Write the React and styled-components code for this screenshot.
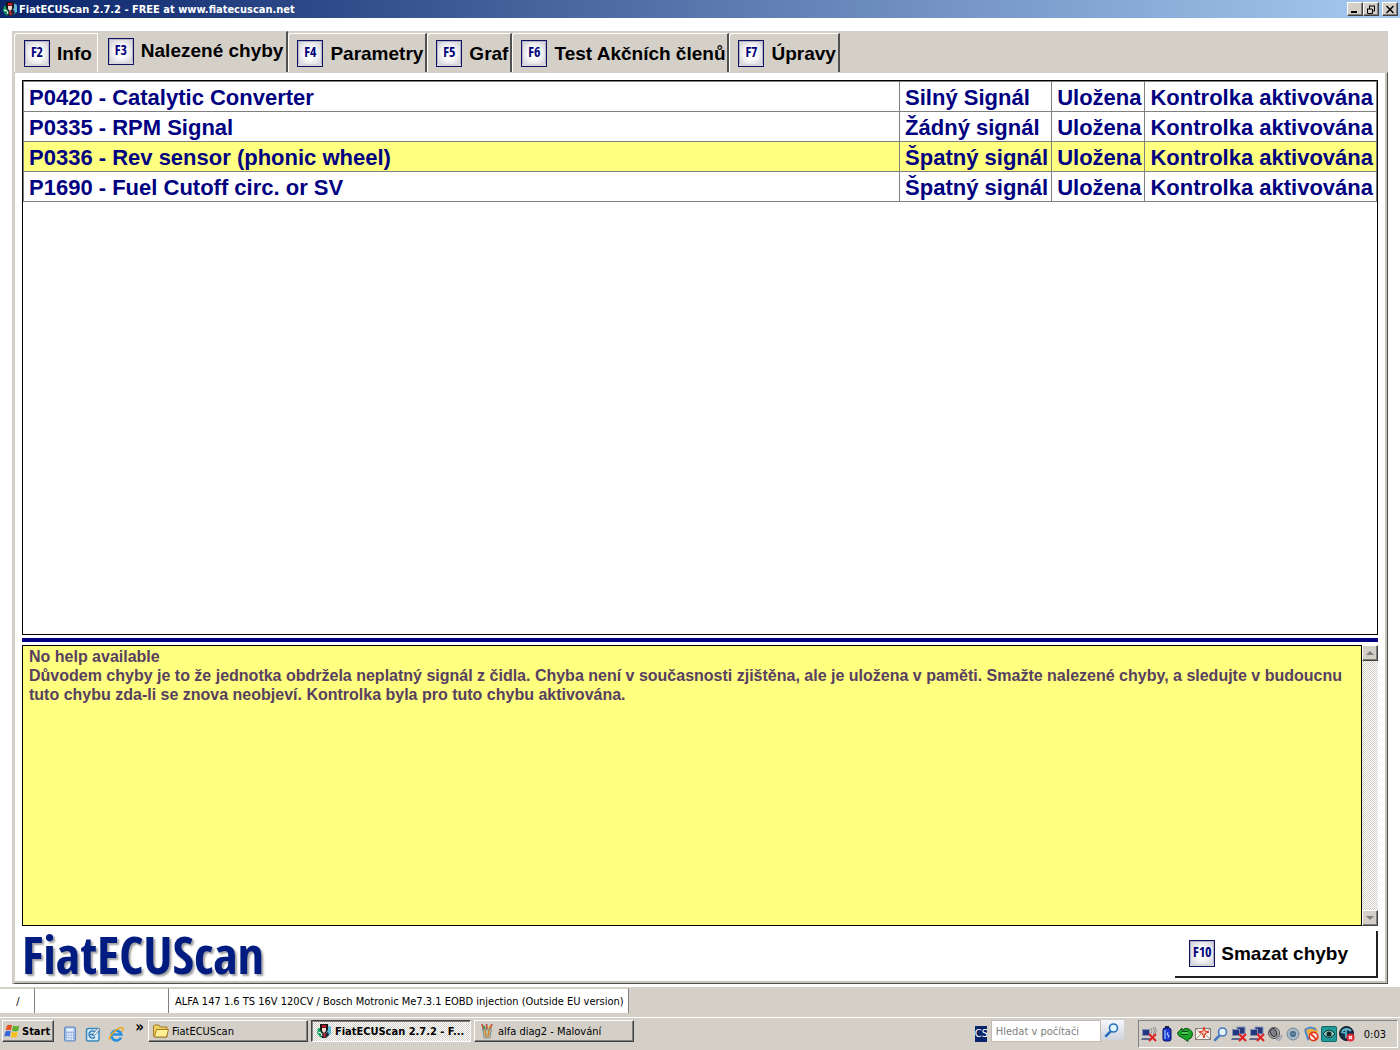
import React, { Component } from 'react'
import styled, { createGlobalStyle, css } from 'styled-components'

const GlobalStyle = createGlobalStyle`
* {
  box-sizing: border-box;
}
body {
  margin: 0;
  background: #ffffff;
}
button, input {
  font: inherit;
  color: inherit;
  margin: 0;
  border-radius: 0;
}
`

const raised = css`
border: 1px solid;
border-color: #ffffff #404040 #404040 #ffffff;
box-shadow: inset -1px -1px 0 #808080;
`

const Window = styled.div`
min-height: 100vh;
display: flex;
flex-direction: column;
font-family: "DejaVu Sans Condensed", "DejaVu Sans", sans-serif;
font-size: 11px;
color: #000000;
`

const TitleBar = styled.header`
height: 18px;
padding: 0 2px;
display: flex;
align-items: center;
gap: 1px;
background: linear-gradient(90deg, #0a246a, #a6caf0);
color: #ffffff;
`

const WindowTitle = styled.h1`
margin: 0;
flex: 1;
font-size: 11px;
font-weight: bold;
`

const WindowButton = styled.button`
width: 16px;
height: 14px;
padding: 0;
margin-left: ${props => props.$apart ? '2px' : '-1px'};
display: flex;
align-items: center;
justify-content: center;
background: #d4d0c8;
${raised}
`

const Main = styled.main`
flex: 1;
padding: 13px 12px 3px;
display: flex;
flex-direction: column;
`

const TabBar = styled.nav`
height: 41px;
padding-left: 2px;
display: flex;
align-items: flex-end;
background: #d4d0c8;
`

const Tab = styled.button`
height: ${props => props.$active ? '41px' : '39px'};
padding: ${props => props.$active ? '0 3px 2px 9px' : '1px 2px 0 8px'};
display: flex;
align-items: center;
gap: 7px;
border: solid;
border-width: 1px 2px 0 1px;
border-color: #ffffff #505050 #d4d0c8 #ffffff;
border-top-left-radius: 3px;
${props => props.$active && 'border-top-color: #d4d0c8; border-left-color: #d4d0c8;'}
${props => props.$first && 'padding: 1px 5px 0 9px; border-right: 1px solid #ffffff;'}
background: #d4d0c8;
font-family: "Liberation Sans", Arial, sans-serif;
font-size: 19px;
font-weight: bold;
white-space: nowrap;
`

const KeyCap = styled.span`
width: 26px;
height: 27px;
flex: none;
display: flex;
justify-content: center;
border: 1px solid #101060;
background: radial-gradient(#ffffff 30%, #c8c8d0);
box-shadow: inset 0 -2px 0 #d8d8dc, inset 0 0 0 1px #b4b4c8;
color: #00007c;
font-family: "Open Sans Condensed", "Roboto Condensed", "Liberation Sans Narrow", sans-serif;
font-size: 14px;
line-height: 22px;
`

const Panel = styled.section`
flex: 1;
padding: 7px 9px 4px 7px;
display: flex;
flex-direction: column;
border: solid;
border-width: 1px 1px 1px 3px;
border-color: #d4d0c8 #505050 #505050 #d4d0c8;
box-shadow: inset -2px -2px 0 #c4c4bc;
`

const FaultFrame = styled.div`
flex: 1;
border: 1px solid #000000;
`

const FaultTable = styled.table`
width: 100%;
border-collapse: collapse;
font-family: "Liberation Sans", Arial, sans-serif;
font-size: 22px;
font-weight: bold;
color: #000080;
`

const FaultRow = styled.tr`
height: 30px;
background: ${props => props.$selected ? '#ffff80' : '#ffffff'};
`

const FaultCell = styled.td`
width: ${props => props.$wide ? '100%' : 'auto'};
padding: 2px 3px 0 5px;
border: 1px solid #808080;
line-height: 27px;
white-space: nowrap;
`

const Splitter = styled.hr`
width: 100%;
height: 4px;
margin: 3px 0;
border: 0;
background: #000080;
`

const HelpArea = styled.div`
height: 281px;
display: flex;
`

const HelpText = styled.div`
flex: 1;
padding: 1px 6px;
border: 1px solid #000000;
background: #ffff80;
color: #584060;
font-family: "Liberation Sans", Arial, sans-serif;
font-size: 16px;
font-weight: bold;
line-height: 19px;
`

const HelpLine = styled.p`
margin: 0;
`

const ScrollBar = styled.div`
width: 16px;
display: flex;
flex-direction: column;
justify-content: space-between;
background: repeating-conic-gradient(#d4d0c8 0 25%, #ffffff 0 50%) 0 0 / 2px 2px;
`

const ScrollButton = styled.button`
width: 16px;
height: 16px;
padding: 0;
display: flex;
align-items: center;
justify-content: center;
background: #d4d0c8;
${raised}
`

const PanelFooter = styled.footer`
height: 53px;
padding-bottom: 1px;
display: flex;
align-items: flex-end;
justify-content: space-between;
`

const Logo = styled.div`
font-family: "Open Sans Condensed", "Roboto Condensed", "Liberation Sans Narrow", sans-serif;
font-size: 52px;
font-weight: bold;
line-height: 48px;
color: #001c80;
text-shadow: 2px 2px 2px #a0a0a0;
`

const ClearButton = styled.button`
height: 47px;
padding: 0 28px 0 14px;
display: flex;
align-items: center;
gap: 6px;
border: 0;
border-right: 2px solid #202020;
border-bottom: 2px solid #202020;
background: #ffffff;
font-family: "Liberation Sans", Arial, sans-serif;
font-size: 19px;
font-weight: bold;
`

const StatusBar = styled.div`
height: 30px;
padding: 1px 0 4px;
display: flex;
background: #d4d0c8;
`

const StatusField = styled.div`
width: ${props => props.$width || 'auto'};
padding: 0 4px 0 6px;
display: flex;
align-items: center;
justify-content: ${props => props.$center ? 'center' : 'flex-start'};
border-right: 1px solid #808080;
border-top: 1px solid #d4d0c8;
background: #ffffff;
white-space: nowrap;
`

const TaskBar = styled.div`
height: 33px;
padding: 2px 2px 2px;
display: flex;
align-items: flex-start;
border-top: 1px solid #ffffff;
background: #d4d0c8;
`

const StartButton = styled.button`
height: 22px;
padding: 0 3px 0 1px;
display: flex;
align-items: center;
gap: 2px;
background: #d4d0c8;
font-weight: bold;
${raised}
`

const QuickLaunch = styled.div`
height: 28px;
padding: 0 4px 0 8px;
display: flex;
align-items: center;
gap: 7px;
`

const More = styled.span`
align-self: flex-start;
margin-left: 4px;
font-size: 15px;
line-height: 14px;
font-weight: bold;
`

const Tasks = styled.div`
flex: 1;
display: flex;
gap: 3px;
`

const TaskButton = styled.button`
width: 160px;
height: 22px;
padding: 0 4px;
display: flex;
align-items: center;
gap: 3px;
background: #d4d0c8;
white-space: nowrap;
${raised}
${props => props.$active && css`
  border-color: #404040 #ffffff #ffffff #404040;
  box-shadow: inset 1px 1px 0 #808080;
  background: repeating-conic-gradient(#d4d0c8 0 25%, #ffffff 0 50%) 0 0 / 2px 2px;
  font-weight: bold;
`}
`

const Language = styled.span`
width: 12px;
height: 16px;
margin: 6px 4px 0 0;
overflow: hidden;
background: #0a246a;
color: #ffffff;
line-height: 16px;
`

const SearchInput = styled.input`
width: 110px;
height: 22px;
padding: 0 4px;
border: 1px solid #c0bcb4;
background: #ffffff;
&::placeholder {
  color: #808080;
  opacity: 1;
}
`

const SearchButton = styled.button`
width: 23px;
height: 20px;
padding: 0;
margin-right: 14px;
display: flex;
align-items: center;
justify-content: center;
border: 0;
background: linear-gradient(#f4f6fa, #cfd3dc);
`

const Tray = styled.div`
height: 28px;
padding: 0 11px 0 2px;
display: flex;
align-items: center;
gap: 2px;
border: 1px solid;
border-color: #808080 #ffffff #ffffff #808080;
`

const Clock = styled.time`
margin-left: 7px;
`

const Svg = ({ size = 16, children }) => (
  <svg width={size} height={size} viewBox="0 0 16 16" aria-hidden="true">{children}</svg>
)

const AppIcon = () => (
  <Svg>
    <path d="M2 5l5 1 1 9-4-1-3-4z" fill="#10a060" />
    <path d="M11 2l4 2v7l-4 3z" fill="#60b8d8" />
    <path d="M4 1h8v6l-2 3H6L4 7z" fill="#181818" />
    <path d="M6 5h4v3l-2 2-2-2z" fill="#f0d8d0" />
    <path d="M6 2h4v2.500H6z" fill="#c81828" />
    <path d="M4 10l4 1 4-2 1 3-3 3H6z" fill="#202838" />
    <path d="M7 10h2l1 4H8z" fill="#d02030" />
    <path d="M2 9l3 1 1 3" stroke="#ffffff" fill="none" />
  </Svg>
)

const WindowsFlag = () => (
  <Svg>
    <path d="M3 2.500Q5.500 1 8 2.200L7 7.300Q4.500 6 1.800 7.500z" fill="#e85020" />
    <path d="M9 2.600Q12 4 15.500 2.500L14.200 7.800Q11 9 8 7.700z" fill="#60b030" />
    <path d="M1.500 8.500Q4.300 7 6.800 8.300L5.700 13.500Q3 12.300.2 13.500z" fill="#3868d8" />
    <path d="M7.800 8.700Q11 10 14 8.800L12.700 14Q9.500 15.200 6.700 13.900z" fill="#f8c020" />
  </Svg>
)

const CalculatorIcon = () => (
  <Svg>
    <rect x="2.500" y="1" width="11" height="14" rx="1" fill="#9cb8e4" stroke="#6888c0" />
    <rect x="4.500" y="2.500" width="7" height="3" fill="#e8f4ff" />
    <path d="M5 8h6M5 10.500h6M5 13h6" stroke="#ffffff" strokeWidth="1.500" strokeDasharray="1.500 .8" />
  </Svg>
)

const DesktopIcon = () => (
  <Svg>
    <rect x="1.500" y="2.500" width="12.500" height="12.500" rx="2" fill="#d8ecf8" stroke="#3888c0" strokeWidth="1.500" />
    <path d="M10 6a3.500 3.500 0 1 0 0 5M5 8.500h5" fill="none" stroke="#2878b8" strokeWidth="1.500" />
    <path d="M8 8l5-6 2 1-5 6-2 1z" fill="#f8fcff" stroke="#406890" strokeWidth=".8" />
  </Svg>
)

const ExplorerIcon = () => (
  <Svg>
    <path d="M13 11.500a5 5 0 1 1 .3-3H5" fill="none" stroke="#2890e0" strokeWidth="2.600" />
    <path d="M2 14.500C-1 12 8 2 14 1.500c2 .2 1 3-.5 4" fill="none" stroke="#f0a818" strokeWidth="1.400" />
  </Svg>
)

const FolderIcon = () => (
  <Svg>
    <path d="M.5 3l1-1h4.500l1.500 2H14v10H1.500l-1-1z" fill="#f0d060" stroke="#987018" strokeWidth=".9" />
    <path d="M1.500 14l2-7.500H15.500l-2 7.500z" fill="#fff098" stroke="#987018" strokeWidth=".9" />
  </Svg>
)

const PaintIcon = () => (
  <Svg>
    <path d="M5 8L3 1M8 8l-.5-7M10 8l3-7" stroke="#c05040" strokeWidth="1.800" />
    <path d="M6 8L5 3" stroke="#30a050" strokeWidth="1.500" />
    <path d="M9 8l2-5" stroke="#e0a020" strokeWidth="1.500" />
    <path d="M3.500 6h9l-1.500 9H5z" fill="#a8c0b8" fillOpacity=".8" stroke="#708080" strokeWidth=".7" />
    <path d="M6 7l1 7M10 7l-1 7" stroke="#d88020" strokeWidth="1.500" />
  </Svg>
)

const SearchIcon = ({ color = '#2870b8' }) => (
  <Svg>
    <path d="M6.500 9.500L2 14" stroke={color} strokeWidth="2.500" strokeLinecap="round" />
    <circle cx="9.500" cy="6" r="4" fill="#e4f4ff" stroke={color} strokeWidth="1.600" />
  </Svg>
)

const RedCross = () => (
  <path d="M8 8l7 7M15 8l-7 7" stroke="#e02020" strokeWidth="2" />
)

const NetworkIcon = ({ wireless }) => (
  <Svg>
    {wireless
      ? <path d="M10 2q2 2.500 0 6M12 1q3 3.500 0 8M14 1q2.500 4 0 7" fill="none" stroke="#909090" />
      : <rect x="6" y="1" width="8" height="7" fill="#283878" stroke="#8898c8" />}
    <rect x="1.500" y="3.500" width="7" height="6" fill="#203880" stroke="#8890b0" />
    <path d="M1 12h8l1 2H0z" fill="#606890" />
    <RedCross />
  </Svg>
)

const BatteryIcon = () => (
  <Svg>
    <rect x="6" y="0" width="4" height="3" fill="#202040" />
    <rect x="4" y="2" width="8" height="13" rx="2" fill="#1838d0" stroke="#101060" />
    <path d="M6 4v9" stroke="#80b0ff" strokeWidth="1.500" />
    <path d="M9 6l-1 3h2l-1 3" stroke="#ffffff" fill="none" strokeWidth=".7" />
  </Svg>
)

const SyncIcon = () => (
  <Svg>
    <path d="M.5 7L5 2v2.500Q8 1 12 3q4 2 3.500 6-1 4-4.500 4.500v2L6 12l-2-1Q1 10 .5 7z" fill="#18a828" stroke="#105018" />
    <path d="M4 8.500h7M5 5.500h6" stroke="#104018" strokeWidth="1.200" />
    <path d="M5 7h6" stroke="#80f070" />
  </Svg>
)

const MailIcon = () => (
  <Svg>
    <rect x=".5" y="2.500" width="15" height="11" fill="#f4f0e8" stroke="#888078" />
    <path d="M1 13l5-5M15 13l-5-5M1 3l7 6 7-6" fill="none" stroke="#a09890" />
    <path d="M9 1l1 4 4 1-4 1.500L9 12 7.500 7.500 4 6l4-1z" fill="#f8c0a8" stroke="#e03020" />
  </Svg>
)

const SpeakerIcon = () => (
  <Svg>
    <circle cx="7" cy="7" r="5.500" fill="#b0b0b0" stroke="#505050" />
    <ellipse cx="6.500" cy="6.500" rx="3" ry="4" transform="rotate(-25 6.500 6.500)" fill="#808088" stroke="#303038" />
    <path d="M11 15q4-2 4-6M9 14q4-1 4-5" fill="none" stroke="#8888a8" />
  </Svg>
)

const DiscIcon = () => (
  <Svg>
    <circle cx="8" cy="8" r="6" fill="#a8b8c4" stroke="#788894" />
    <circle cx="8" cy="8" r="3" fill="#406888" />
    <path d="M6 8h4" stroke="#90a8b8" />
  </Svg>
)

const BlockedIcon = () => (
  <Svg>
    <path d="M1 2l6 1 6-2 2 5-5 3-7-1z" fill="#f0b040" />
    <path d="M2 4q6-5 11 0M2 4l3 9 4-3" fill="none" stroke="#4888d0" strokeWidth="2" />
    <circle cx="10.500" cy="10.500" r="4.200" fill="#ffffff" stroke="#e03818" strokeWidth="1.800" />
    <path d="M7.500 7.500l6 6" stroke="#e03818" strokeWidth="1.800" />
  </Svg>
)

const EyeIcon = () => (
  <Svg>
    <rect x=".5" y=".5" width="15" height="15" rx="1" fill="#209898" stroke="#106868" />
    <path d="M2 8q6-8 12 0-6 7-12 0z" fill="#90c8c0" stroke="#103838" />
    <circle cx="8" cy="8" r="2.500" fill="#102828" />
  </Svg>
)

const GlobeIcon = () => (
  <Svg>
    <circle cx="7.500" cy="7.500" r="7" fill="#103048" stroke="#101820" />
    <path d="M3 5q5-4 9 0M7 4v8M2 6l4 1" fill="none" stroke="#60b8d0" strokeWidth="1.800" />
    <circle cx="11.500" cy="11.500" r="4" fill="#e02838" />
    <path d="M10 10l3 3M13 10l-3 3" stroke="#ffffff" strokeWidth="1.200" />
  </Svg>
)

const Arrow = ({ down }) => (
  <svg width="8" height="4" viewBox="0 0 8 4" aria-hidden="true">
    <path d={down ? 'M0 0h8L4 4z' : 'M0 4h8L4 0z'} fill="#808080" />
  </svg>
)

const tabs = [
  { keyName: 'F2', label: 'Info' },
  { keyName: 'F3', label: 'Nalezené chyby' },
  { keyName: 'F4', label: 'Parametry' },
  { keyName: 'F5', label: 'Graf' },
  { keyName: 'F6', label: 'Test Akčních členů' },
  { keyName: 'F7', label: 'Úpravy' }
]

const faults = [
  ['P0420 - Catalytic Converter', 'Silný Signál', 'Uložena', 'Kontrolka aktivována'],
  ['P0335 - RPM Signal', 'Žádný signál', 'Uložena', 'Kontrolka aktivována'],
  ['P0336 - Rev sensor (phonic wheel)', 'Špatný signál', 'Uložena', 'Kontrolka aktivována'],
  ['P1690 - Fuel Cutoff circ. or SV', 'Špatný signál', 'Uložena', 'Kontrolka aktivována']
]

class App extends Component {

state = {
  tab: 1,
  selected: 2
}

openTab = (tab) => {
  this.setState({ tab: tab });
};

selectFault = (selected) => {
  this.setState({ selected: selected });
};

  render() {
    return (
      <>
      <GlobalStyle />
      <Window>
        <TitleBar>
          <AppIcon />
          <WindowTitle>FiatECUScan 2.7.2 - FREE at www.fiatecuscan.net</WindowTitle>
          <WindowButton aria-label="Minimize">
            <svg width="10" height="9"><path d="M1 7h6" stroke="#000" strokeWidth="2" /></svg>
          </WindowButton>
          <WindowButton aria-label="Restore">
            <svg width="10" height="9"><path d="M3 1h6M3.500 1v3M8.500 1v5H6M1 4h5M1.500 4v4.500h5V4" fill="none" stroke="#000" /></svg>
          </WindowButton>
          <WindowButton aria-label="Close" $apart>
            <svg width="10" height="9"><path d="M1.500 1l7 7M8.500 1l-7 7" stroke="#000" strokeWidth="1.500" /></svg>
          </WindowButton>
        </TitleBar>

        <Main>
          <TabBar role="tablist">
            {tabs.map((tab, i) => (
              <Tab
                key={tab.keyName}
                role="tab"
                aria-selected={i === this.state.tab}
                $active={i === this.state.tab}
                $first={i === 0}
                onClick={() => this.openTab(i)}
              >
                <KeyCap>{tab.keyName}</KeyCap>
                {tab.label}
              </Tab>
            ))}
          </TabBar>

          <Panel>
            <FaultFrame>
              <FaultTable>
                <tbody>
                  {faults.map((fault, i) => (
                    <FaultRow key={fault[0]} $selected={i === this.state.selected} onClick={() => this.selectFault(i)}>
                      {fault.map((text, n) => (
                        <FaultCell key={n} $wide={n === 0}>{text}</FaultCell>
                      ))}
                    </FaultRow>
                  ))}
                </tbody>
              </FaultTable>
            </FaultFrame>
            <Splitter />
            <HelpArea>
              <HelpText>
                <HelpLine>No help available</HelpLine>
                <HelpLine>
                  Důvodem chyby je to že jednotka obdržela neplatný signál z čidla. Chyba není v současnosti zjištěna, ale je uložena v paměti. Smažte nalezené chyby, a sledujte v budoucnu tuto chybu zda-li se znova neobjeví. Kontrolka byla pro tuto chybu aktivována.
                </HelpLine>
              </HelpText>
              <ScrollBar>
                <ScrollButton aria-label="Scroll up"><Arrow /></ScrollButton>
                <ScrollButton aria-label="Scroll down"><Arrow down /></ScrollButton>
              </ScrollBar>
            </HelpArea>
            <PanelFooter>
              <Logo>FiatECUScan</Logo>
              <ClearButton><KeyCap>F10</KeyCap>Smazat chyby</ClearButton>
            </PanelFooter>
          </Panel>
        </Main>

        <StatusBar>
          <StatusField $width="35px" $center>/</StatusField>
          <StatusField $width="134px" />
          <StatusField>ALFA 147 1.6 TS 16V 120CV / Bosch Motronic Me7.3.1 EOBD injection (Outside EU version)</StatusField>
        </StatusBar>

        <TaskBar>
          <StartButton><WindowsFlag />Start</StartButton>
          <QuickLaunch>
            <CalculatorIcon />
            <DesktopIcon />
            <ExplorerIcon />
            <More>»</More>
          </QuickLaunch>
          <Tasks>
            <TaskButton><FolderIcon />FiatECUScan</TaskButton>
            <TaskButton $active><AppIcon />FiatECUScan 2.7.2 - F...</TaskButton>
            <TaskButton><PaintIcon />alfa diag2 - Malování</TaskButton>
          </Tasks>
          <Language>CS</Language>
          <SearchInput type="text" aria-label="Hledat v počítači" placeholder="Hledat v počítači" />
          <SearchButton aria-label="Hledat"><SearchIcon /></SearchButton>
          <Tray>
            <NetworkIcon wireless />
            <BatteryIcon />
            <SyncIcon />
            <MailIcon />
            <SearchIcon color="#4878c0" />
            <NetworkIcon />
            <NetworkIcon />
            <SpeakerIcon />
            <DiscIcon />
            <BlockedIcon />
            <EyeIcon />
            <GlobeIcon />
            <Clock>0:03</Clock>
          </Tray>
        </TaskBar>
      </Window>
      </>
    )
  }
}


export default App;
